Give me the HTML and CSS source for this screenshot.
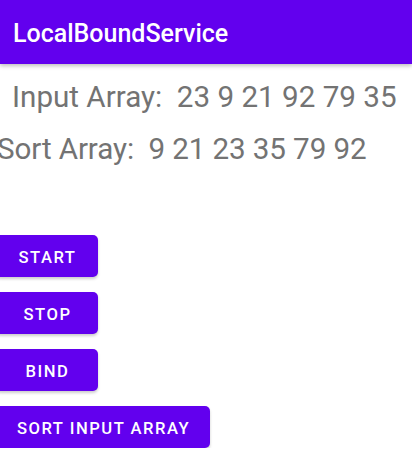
FILE: index.html
```html
<!DOCTYPE html>
<html>
<head>
<meta charset="utf-8">
<link rel="stylesheet" href="styles.css">
</head>
<body>
<header class="appbar"><span class="title">LocalBoundService</span></header>
<main class="content">
  <p class="line line-input">Input Array:&nbsp; 23 9 21 92 79 35</p>
  <p class="line line-sort">Sort Array:&nbsp; 9 21 23 35 79 92</p>
  <div class="buttons">
    <button class="btn">Start</button>
    <button class="btn">Stop</button>
    <button class="btn">Bind</button>
    <button class="btn">Sort Input Array</button>
  </div>
</main>
</body>
</html>
```
FILE: styles.css
```css
html, body {
  margin: 0;
  padding: 0;
  background: #ffffff;
  font-family: Roboto, "Noto Sans", sans-serif;
  overflow: hidden;
}
.appbar {
  height: 64px;
  background: #6200ee;
  display: flex;
  align-items: center;
  padding-left: 13px;
  box-shadow: 0 2px 4px rgba(0,0,0,0.25);
  position: relative;
}
.title {
  color: #ffffff;
  font-size: 25px;
  font-weight: 500;
  margin-top: 2px;
}
.content {
  display: flex;
  flex-direction: column;
}
.line {
  margin: 0;
  font-size: 29.6px;
  color: #737373;
  line-height: 34px;
  white-space: nowrap;
}
.line-input {
  margin-left: 12px;
  margin-top: 16px;
}
.line-sort {
  margin-top: 18px;
  margin-left: -3px;
  letter-spacing: -0.1px;
}
.buttons {
  display: flex;
  flex-direction: column;
  align-items: flex-start;
  gap: 15px;
  margin-top: 69px;
  margin-left: -5px;
}
.btn {
  height: 42px;
  min-width: 103px;
  background: #6200ee;
  color: #ffffff;
  border: none;
  border-radius: 5px;
  font-family: Roboto, sans-serif;
  font-weight: 500;
  font-size: 16.6px;
  letter-spacing: 1.5px;
  text-transform: uppercase;
  padding: 2px 20px 0 22px;
  box-shadow: 0 2px 3px rgba(0,0,0,0.2);
}
```
